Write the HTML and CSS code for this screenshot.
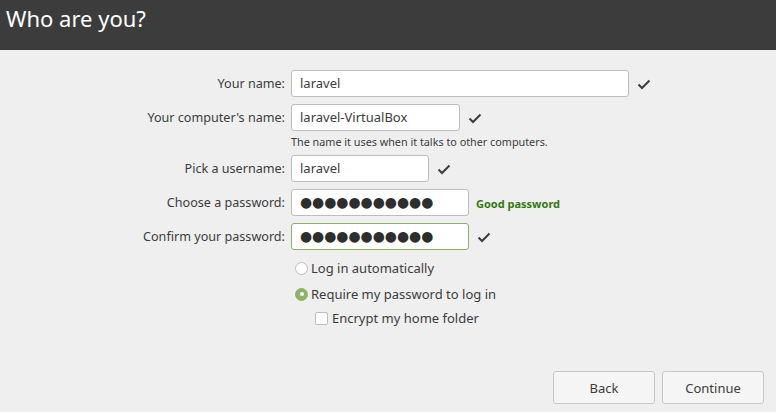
FILE: index.html
```html
<!DOCTYPE html>
<html>
<head>
<meta charset="utf-8">
<link rel="stylesheet" href="styles.css">
</head>
<body>
<div class="page">
  <header class="titlebar"><h1 class="title">Who are you?</h1></header>
  <main class="content">
    <div class="form">
      <label class="lbl">Your name:</label>
      <div class="field">
        <div class="entry w-name">laravel</div>
        <svg class="check" viewBox="0 0 14 14" width="14" height="14"><path d="M1.5 7.5 L5 11 L12.5 3.5" fill="none" stroke="#3c3c3c" stroke-width="2"/></svg>
      </div>

      <label class="lbl">Your computer's name:</label>
      <div class="field-col">
        <div class="field">
          <div class="entry w-comp">laravel-VirtualBox</div>
          <svg class="check" viewBox="0 0 14 14" width="14" height="14"><path d="M1.5 7.5 L5 11 L12.5 3.5" fill="none" stroke="#3c3c3c" stroke-width="2"/></svg>
        </div>
        <div class="hint">The name it uses when it talks to other computers.</div>
      </div>

      <label class="lbl">Pick a username:</label>
      <div class="field">
        <div class="entry w-user">laravel</div>
        <svg class="check" viewBox="0 0 14 14" width="14" height="14"><path d="M1.5 7.5 L5 11 L12.5 3.5" fill="none" stroke="#3c3c3c" stroke-width="2"/></svg>
      </div>

      <label class="lbl">Choose a password:</label>
      <div class="field">
        <div class="entry w-pass dots">●●●●●●●●●●●</div>
        <span class="strength">Good password</span>
      </div>

      <label class="lbl">Confirm your password:</label>
      <div class="field">
        <div class="entry w-pass dots ok">●●●●●●●●●●●</div>
        <svg class="check check-far" viewBox="0 0 14 14" width="14" height="14"><path d="M1.5 7.5 L5 11 L12.5 3.5" fill="none" stroke="#3c3c3c" stroke-width="2"/></svg>
      </div>

      <div class="spacer"></div>
      <div class="options">
        <div class="opt"><span class="radio"></span><span>Log in automatically</span></div>
        <div class="opt"><span class="radio on"></span><span>Require my password to log in</span></div>
        <div class="opt sub"><span class="checkbox"></span><span>Encrypt my home folder</span></div>
      </div>
    </div>
  </main>
  <footer class="buttons">
    <button class="btn">Back</button>
    <button class="btn">Continue</button>
  </footer>
</div>
</body>
</html>
```

FILE: styles.css
```css
* { box-sizing: border-box; }
html, body { margin: 0; padding: 0; }
body {
  background: #efefef;
  font-family: "Noto Sans", "DejaVu Sans", sans-serif;
  font-size: 13px;
  color: #3c3c3c;
}
.page {
  height: 412px;
  display: flex;
  flex-direction: column;
}
.titlebar {
  background: #3c3c3c;
  height: 50px;
  padding: 3px 0 0 6px;
}
.title {
  margin: 0;
  font-weight: normal;
  font-size: 22px;
  color: #ffffff;
  line-height: 30px;
}
.content {
  flex: 1;
  padding-top: 20px;
}
.form {
  display: grid;
  grid-template-columns: 285px auto;
  column-gap: 6px;
  row-gap: 7px;
  align-items: start;
}
.lbl {
  text-align: right;
  line-height: 27px;
  height: 27px;
  white-space: nowrap;
  font-size: 12.6px;
}
.field {
  display: flex;
  align-items: center;
  height: 27px;
}
.field-col {
  display: flex;
  flex-direction: column;
}
.entry {
  height: 27px;
  background: #ffffff;
  border: 1px solid #bdbdbd;
  border-radius: 3px;
  padding: 0 8px;
  line-height: 25px;
  white-space: nowrap;
  overflow: hidden;
}
.entry.ok { border-color: #8bb062; }
.w-name { width: 338px; }
.w-comp { width: 169px; }
.w-user { width: 138px; }
.w-pass { width: 178px; }
.dots {
  font-family: "DejaVu Sans", sans-serif;
  font-size: 13.9px;
  letter-spacing: 0;
  color: #2e2e2e;
}
.check { margin-left: 8px; }
.check-far { margin-left: 8px; }
.hint {
  font-size: 10.8px;
  line-height: 14px;
  margin-top: 4px;
  margin-bottom: -1px;
}
.strength {
  margin-left: 7px;
  font-size: 11px;
  font-weight: bold;
  color: #2f7a0e;
  padding-top: 1px;
}
.spacer { grid-column: 1; }
.options {
  grid-column: 2;
  margin-top: -2px;
  display: flex;
  flex-direction: column;
}
.opt {
  display: flex;
  align-items: center;
  height: 26px;
  padding-left: 4px;
}
.opt.sub {
  height: 22px;
  padding-left: 24px;
}
.radio {
  width: 13px;
  height: 13px;
  border-radius: 50%;
  border: 1px solid #bdbdbd;
  background: #fff;
  margin-right: 3px;
  flex: none;
}
.radio.on {
  background: #8fb26b;
  border-color: #8fb26b;
  display: flex;
  align-items: center;
  justify-content: center;
}
.radio.on::after {
  content: "";
  width: 4px;
  height: 4px;
  border-radius: 50%;
  background: #fff;
}
.checkbox {
  width: 13px;
  height: 13px;
  border: 1px solid #bdbdbd;
  border-radius: 2px;
  background: #fff;
  margin-right: 4px;
  flex: none;
}
.buttons {
  display: flex;
  justify-content: flex-end;
  gap: 7px;
  padding: 0 12px 8px 0;
}
.btn {
  width: 102px;
  height: 33px;
  background: #f5f5f5;
  border: 1px solid #c6c6c6;
  border-radius: 3px;
  font-family: "Noto Sans", "DejaVu Sans", sans-serif;
  font-size: 13px;
  color: #3c3c3c;
}
```
